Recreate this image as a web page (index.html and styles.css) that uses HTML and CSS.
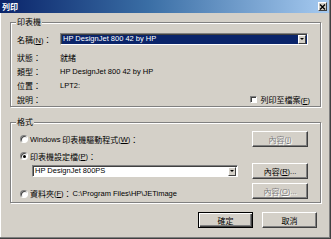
FILE: index.html
```html
<!DOCTYPE html>
<html>
<head>
<meta charset="utf-8">
<link rel="stylesheet" href="styles.css">
</head>
<body>
<div class="win">
  <div class="titlebar">
    <span class="title">列印</span>
    <span class="close"><svg width="7" height="6" viewBox="0 0 7 6"><path d="M1 0.5 L6 5.5 M6 0.5 L1 5.5" stroke="#000" stroke-width="1.4"/></svg></span>
  </div>
  <div class="content">
    <fieldset class="group g1">
      <legend>印表機</legend>
      <div class="name-row">
        <span class="lbl">名稱<span class="l">(<u>N</u>)</span>：</span>
        <div class="combo sel"><span class="ctext l">HP DesignJet 800 42 by HP</span><span class="drop"><span class="arrow"></span></span></div>
      </div>
      <div class="info first"><span class="lbl">狀態：</span><span class="val">就緒</span></div>
      <div class="info"><span class="lbl">類型：</span><span class="val l">HP DesignJet 800 42 by HP</span></div>
      <div class="info"><span class="lbl">位置：</span><span class="val l">LPT2:</span></div>
      <div class="info"><span class="lbl">說明：</span><span class="val"></span><span class="check"><span class="box"></span><span>列印至檔案<span class="l">(<u>F</u>)</span></span></span></div>
    </fieldset>
    <fieldset class="group g2">
      <legend>格式</legend>
      <div class="frow ra">
        <span class="opt"><span class="radio"></span><span class="l">Windows</span>&nbsp;印表機驅動程式<span class="l">(<u>W</u>)</span>：</span>
        <span class="btn dis">內容<span class="l">(<u>I</u>)</span></span>
      </div>
      <div class="frow rb">
        <span class="opt"><span class="radio on"></span>印表機設定檔<span class="l">(<u>P</u>)</span>：</span>
      </div>
      <div class="frow rc">
        <div class="combo plain"><span class="ctext l">HP DesignJet 800PS</span><span class="drop"><span class="arrow"></span></span></div>
        <span class="btn">內容<span class="l">(<u>R</u>)...</span></span>
      </div>
      <div class="frow rd">
        <span class="opt low"><span class="radio"></span>資料夾<span class="l">(<u>F</u>)</span>：<span class="l path">C:\Program Files\HP\JETimage</span></span>
        <span class="btn dis">內容<span class="l">(<u>O</u>)...</span></span>
      </div>
    </fieldset>
    <div class="actions">
      <span class="btn def">確定</span>
      <span class="btn">取消</span>
    </div>
  </div>
</div>
</body>
</html>
```

FILE: styles.css
```css
* { box-sizing: border-box; }
html, body { margin: 0; padding: 0; }
body {
  width: 331px; height: 239px; overflow: hidden;
  background: #d4d0c8;
  font-family: "Noto Sans CJK TC", "Liberation Sans", sans-serif;
  font-size: 8px; color: #000;
}
.l { font-family: "Liberation Sans Narrow", "Liberation Sans", sans-serif; font-size: 7.5px; }
u { text-decoration: underline; text-underline-offset: 1px; }
.win {
  width: 331px; height: 239px;
  background: #d4d0c8;
  border-right: 1px solid #404040;
  border-bottom: 1px solid #404040;
  box-shadow: inset -1px -1px 0 #808080, inset 1px 0 0 #fff;
  display: flex; flex-direction: column;
}
.titlebar {
  height: 13px; margin-right: 1px;
  background: linear-gradient(to right, #0a246a 0%, #3a6ea5 45%, #a6caf0 100%);
  display: flex; align-items: center; justify-content: space-between;
  padding: 0 2px 0 2px;
}
.title { color: #fff; font-weight: bold; font-size: 8px; line-height: 13px; }
.close {
  width: 9px; height: 9px; background: #d4d0c8;
  border: 1px solid; border-color: #fff #404040 #404040 #fff;
  display: flex; align-items: center; justify-content: center;
}
.content { padding: 4px 0 0 10px; display: flex; flex-direction: column; }
.group {
  margin: 0; width: 311px; min-width: 0;
  padding: 0 12px 0 6px;
  border: 1px solid #808080;
  box-shadow: inset 1px 1px 0 #fff, 1px 1px 0 #fff;
}
.group legend {
  padding: 0 1px; margin-left: -1px;
  line-height: 10px; height: 10px; font-size: 8px;
  background: #d4d0c8;
}
.g2 { margin-top: 10px; padding-bottom: 3px; }
.name-row { display: flex; align-items: center; margin-top: 6px; height: 12px; }
.lbl { width: 43px; flex: none; white-space: nowrap; }
.combo {
  height: 12px; display: flex; align-items: center;
  border: 1px solid; border-color: #808080 #fff #fff #808080;
  box-shadow: inset 1px 1px 0 #404040;
  padding: 0 1px 0 2px;
}
.combo.sel { flex: 1; background: #0a246a; color: #fff; }
.combo.plain { width: 206px; margin-left: 15px; background: #fff; }
.ctext { flex: 1; white-space: nowrap; line-height: 10px; }
.drop {
  width: 8px; height: 9px; background: #d4d0c8; flex: none;
  border: 1px solid; border-color: #fff #404040 #404040 #fff;
  display: flex; align-items: center; justify-content: center;
}
.arrow {
  width: 0; height: 0;
  border-left: 2px solid transparent; border-right: 2px solid transparent;
  border-top: 2px solid #000;
}
.info { display: flex; align-items: center; height: 14px; }
.info.first { margin-top: 5px; }
.val { flex: 1; white-space: nowrap; }
.check { display: flex; align-items: center; gap: 3px; margin-right: -2px; white-space: nowrap; }
.box {
  width: 7px; height: 7px; background: #fff;
  border: 1px solid; border-color: #808080 #fff #fff #808080;
  box-shadow: inset 1px 1px 0 #404040;
}
.frow { display: flex; align-items: center; justify-content: space-between; }
.ra { margin-top: 4px; height: 16px; }
.rb { margin-top: 2px; height: 14px; }
.rc { height: 16px; }
.rd { margin-top: 4px; height: 16px; }
.opt { display: flex; align-items: center; white-space: nowrap; }
.opt.low { padding-top: 5px; }
.path { margin-left: 1px; }
.radio {
  width: 8px; height: 8px; border-radius: 50%; background: #fff; flex: none;
  margin: 0 2px 0 3px;
  border: 1px solid; border-color: #808080 #fff #fff #808080;
  box-shadow: inset 1px 1px 0 #404040;
  display: flex; align-items: center; justify-content: center;
}
.radio.on::after { content: ""; width: 3px; height: 3px; border-radius: 50%; background: #000; }
.btn {
  width: 56px; height: 16px; flex: none;
  display: flex; align-items: center; justify-content: center;
  background: #d4d0c8; white-space: nowrap;
  border: 1px solid; border-color: #fff #404040 #404040 #fff;
  box-shadow: inset -1px -1px 0 #808080;
}
.btn.dis { color: #808080; text-shadow: 1px 1px 0 #fff; }
.actions { display: flex; justify-content: flex-end; gap: 9px; margin-top: 9px; padding-right: 13px; }
.actions .btn { width: 55px; }
.btn.def {
  border: 1px solid #000;
  box-shadow: inset 1px 1px 0 #fff, inset -1px -1px 0 #404040, inset -2px -2px 0 #808080;
}
```
